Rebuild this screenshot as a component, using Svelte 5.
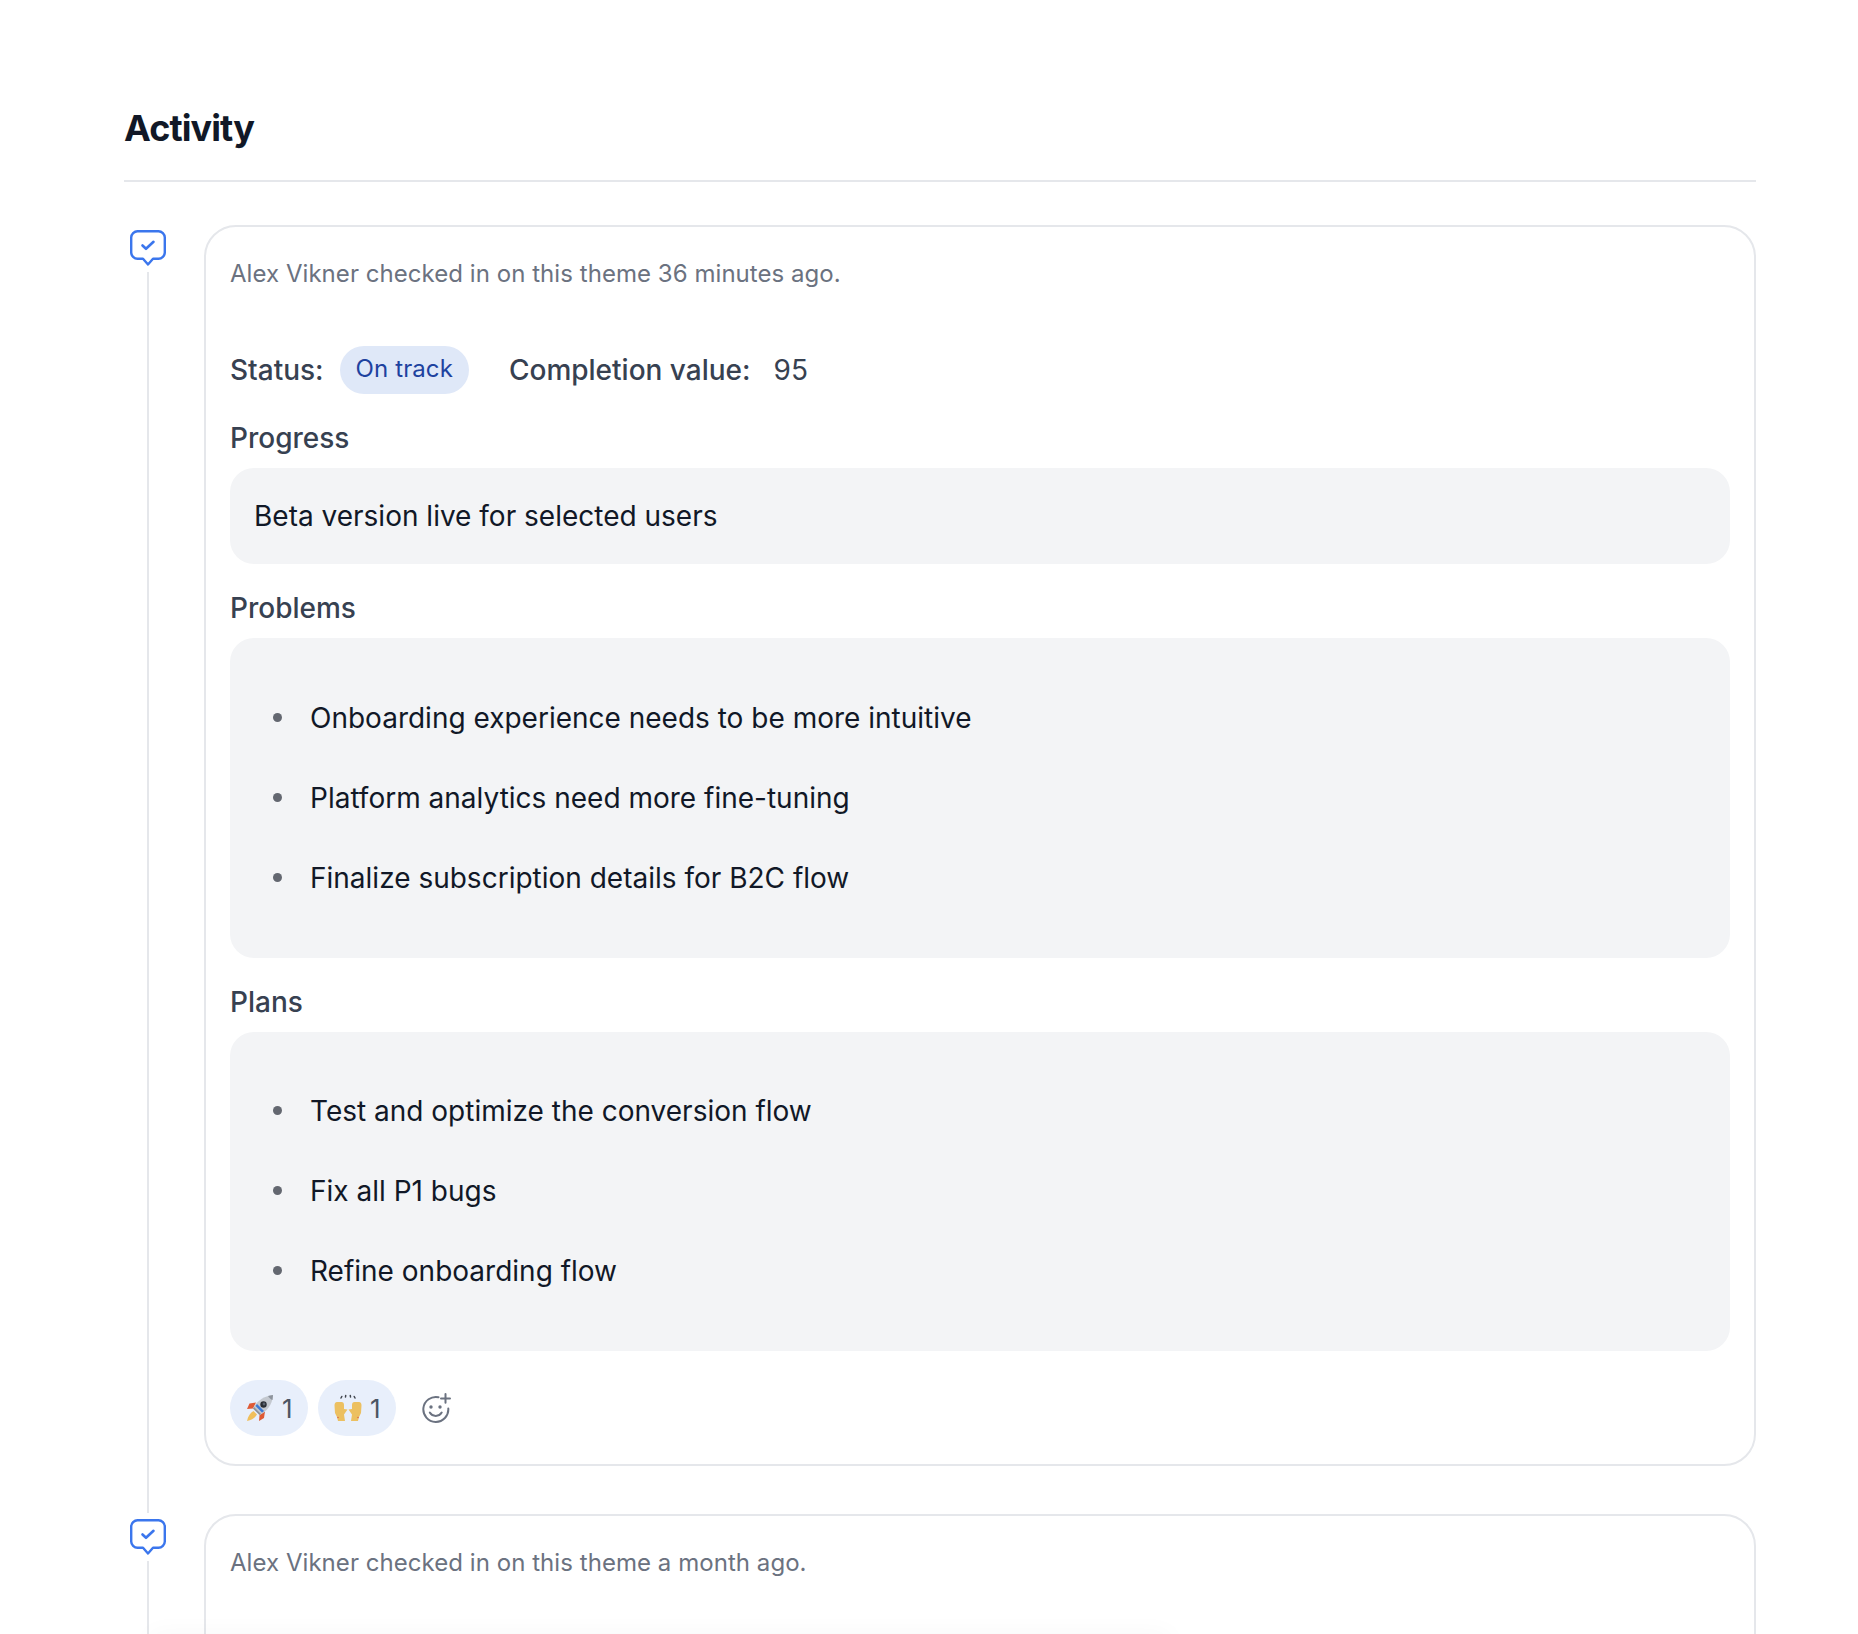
<script>
  const sections = [
    { title: "Problems", items: ["Onboarding experience needs to be more intuitive", "Platform analytics need more fine-tuning", "Finalize subscription details for B2C flow"] },
    { title: "Plans", items: ["Test and optimize the conversion flow", "Fix all P1 bugs", "Refine onboarding flow"] },
  ];
</script>

{#snippet marker()}
  <svg class="marker" width="36" height="36" viewBox="0 0 36 36" fill="none">
    <path d="M7.5 1.2H28.5C31.8 1.2 34.8 4.2 34.800 7.5V22.500C34.800 25.800 31.800 28.800 28.500 28.800H23L18 34.500L13 28.800H7.500C4.200 28.800 1.200 25.800 1.200 22.500V7.500C1.200 4.200 4.200 1.200 7.500 1.200Z" stroke="#3b76ed" stroke-width="2.400" stroke-linejoin="round" />
    <path d="M12.500 15.500L16 18.800L23.500 11.800" stroke="#3b76ed" stroke-width="2.600" stroke-linecap="round" stroke-linejoin="round" />
  </svg>
{/snippet}

<div class="page">
  <h1>Activity</h1>
  <div class="timeline">
    <div class="entry">
      <div class="rail">
        {@render marker()}
        <div class="line"></div>
      </div>
      <div class="card">
        <p class="meta">Alex Vikner checked in on this theme 36 minutes ago.</p>
        <div class="status">
          <span class="label">Status:</span>
          <span class="pill">On track</span>
          <span class="label completion">Completion value:</span>
          <span class="value">95</span>
        </div>
        <div class="label head first">Progress</div>
        <div class="box">Beta version live for selected users</div>
        {#each sections as s}
          <div class="label head">{s.title}</div>
          <div class="box">
            <ul>
              {#each s.items as item}
                <li>{item}</li>
              {/each}
            </ul>
          </div>
        {/each}
        <div class="reactions">
          <span class="reaction">
            <svg width="28" height="28" viewBox="0 0 28 28">
              <path d="M10 8.500L3.500 9.500L1 15L7 14.500Z" fill="#df5a35" />
              <path d="M19 17.500L18 24L13 27L13.500 21Z" fill="#df5a35" />
              <path d="M7.500 17C4.500 18.500 2 22 1 27C5.500 26.500 9.500 23.500 11 20.500Z" fill="#f0bf5a" />
              <path d="M7 14.500C10 8 17 2 27 1C26.500 11 20 18 13.500 21Z" fill="#c3c8cf" />
              <path d="M22 2L27 1L26.500 6C25 5.500 23 3.800 22 2Z" fill="#8d939c" />
              <path d="M8 13L15 20L13.500 21L7 14.500Z" fill="#8b9099" />
              <path d="M11 10L18 17L16 18.500L9.500 12Z" fill="#3d7ad6" />
              <circle cx="17.500" cy="10.500" r="3.200" fill="#2a2e35" />
              <circle cx="18" cy="10" r="1.400" fill="#59616d" />
            </svg>
            1
          </span>
          <span class="reaction">
            <svg width="28" height="28" viewBox="0 0 28 28">
              <path d="M0.500 11.500Q0.500 8 3 8L7.500 8Q10 8 10 11L10 15L13.500 15.500L10 20.500L11 27L4 27Q3 22 1 19Z" fill="#ecc061" />
              <path d="M27.500 11.500Q27.500 8 25 8L20.500 8Q18 8 18 11L18 15L14.500 15.500L18 20.500L17 27L24 27Q25 22 27 19Z" fill="#ecc061" />
              <path d="M7 4L7.800 2.500M11.500 3L11.700 1.500M16.500 3L16.300 1.500M21 4L20.200 2.500" stroke="#3f444c" stroke-width="1.500" stroke-linecap="round" />
              <circle cx="4" cy="23.500" r="0.700" fill="#d8553f" />
              <circle cx="24" cy="23.500" r="0.700" fill="#d8553f" />
            </svg>
            1
          </span>
          <svg class="add" width="30" height="30" viewBox="0 0 30 30" fill="none" stroke="#6b7280" stroke-width="2" stroke-linecap="round">
            <path d="M16.500 4.200A12.500 12.500 0 1 0 26.300 15.500" />
            <path d="M7.800 19.500C10.500 24 17 24 19.700 19.500" />
            <path d="M23.500 1V9.800M19 5.400H28" />
            <circle cx="9" cy="14" r="1.700" fill="#6b7280" stroke="none" />
            <circle cx="18" cy="14" r="1.700" fill="#6b7280" stroke="none" />
          </svg>
        </div>
      </div>
    </div>
    <div class="entry">
      <div class="rail">
        {@render marker()}
        <div class="line"></div>
      </div>
      <div class="card tall">
        <p class="meta">Alex Vikner checked in on this theme a month ago.</p>
      </div>
    </div>
  </div>
  <div class="fade"></div>
</div>

<style>
  :global(body) {
    margin: 0;
    background: #fff;
    font-family: Inter, "Liberation Sans", sans-serif;
    color: #111827;
  }
  .page {
    position: relative;
    height: 1634px;
    overflow: hidden;
    box-sizing: border-box;
    padding: 104px 102px 0 124px;
  }
  h1 {
    margin: 0;
    font-size: 36px;
    line-height: 48px;
    font-weight: 700;
    letter-spacing: -0.9px;
    color: #111827;
    padding-bottom: 28px;
    border-bottom: 2px solid #e5e7eb;
  }
  .timeline {
    margin-top: 43px;
  }
  .entry {
    display: flex;
    gap: 32px;
    padding-bottom: 48px;
  }
  .rail {
    width: 48px;
    flex: none;
    display: flex;
    flex-direction: column;
    align-items: center;
    padding-top: 5px;
    margin-bottom: -48px;
  }
  .marker {
    flex: none;
  }
  .line {
    flex: 1;
    width: 2px;
    background: #e5e7eb;
    margin: 6px 0 1px;
  }
  .card {
    flex: 1;
    border: 2px solid #e5e7eb;
    border-radius: 32px;
    padding: 29px 24px 28px;
  }
  .tall {
    min-height: 300px;
  }
  .meta {
    margin: 0;
    font-size: 24px;
    line-height: 36px;
    letter-spacing: 0.05px;
    color: #6b7280;
  }
  .status {
    display: flex;
    align-items: center;
    margin-top: 54px;
    font-size: 28px;
  }
  .label {
    font-size: 28px;
    line-height: 36px;
    font-weight: 500;
    color: #374151;
  }
  .pill {
    margin-left: 16px;
    padding: 0 16px;
    height: 48px;
    line-height: 46px;
    border-radius: 24px;
    background: #dfe8f8;
    color: #1e429f;
    font-size: 24px;
    letter-spacing: 0.1px;
  }
  .completion {
    margin-left: 40px;
  }
  .value {
    margin-left: 23px;
    color: #374151;
  }
  .head {
    margin-top: 26px;
    margin-bottom: 12px;
  }
  .box {
    background: #f3f4f6;
    border-radius: 24px;
    padding: 24px;
    font-size: 28px;
    line-height: 48px;
    color: #111827;
  }
  .box ul {
    list-style: none;
    margin: 15.5px 0 16px;
    padding: 0 0 0 56px;
  }
  .box li {
    position: relative;
    padding: 16px 0;
  }
  .box li::before {
    content: "";
    position: absolute;
    left: -37px;
    top: 35px;
    width: 9px;
    height: 9px;
    border-radius: 50%;
    background: #636770;
  }
  .reactions {
    display: flex;
    align-items: center;
    gap: 10px;
    margin-top: 29px;
  }
  .reaction {
    display: flex;
    align-items: center;
    gap: 8px;
    width: 78px;
    height: 56px;
    box-sizing: border-box;
    padding-left: 16px;
    border-radius: 28px;
    background: #e8effb;
    font-size: 26px;
    color: #4b5563;
  }
  .add {
    margin-left: 16px;
  }
  .fade {
    position: absolute;
    left: 150px;
    top: 1640px;
    width: 1020px;
    height: 10px;
    box-shadow: 0 -4px 24px rgba(0, 0, 0, 0.06);
  }
</style>
